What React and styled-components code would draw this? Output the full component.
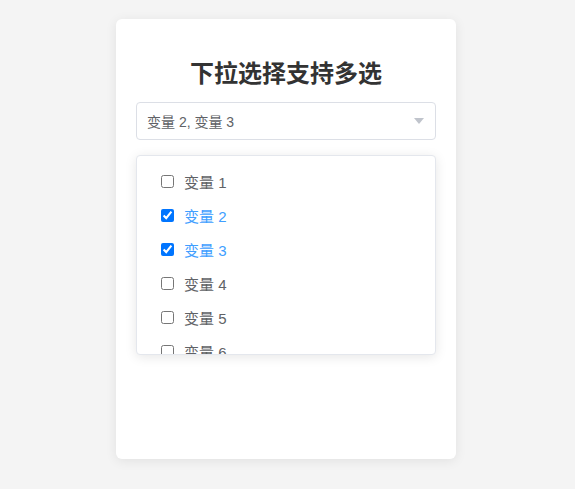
import React, { useState } from "react";
import styled, { createGlobalStyle } from "styled-components";

const GlobalStyle = createGlobalStyle`
  html, body {
    margin: 0;
    padding: 0;
    background: #f4f4f4;
    font-family: "Liberation Sans", "Noto Sans CJK SC", sans-serif;
  }
`;

const Page = styled.div`
  display: flex;
  justify-content: center;
  padding-top: 19px;
  min-height: 489px;
  box-sizing: border-box;
`;

const Card = styled.div`
  width: 340px;
  height: 440px;
  box-sizing: border-box;
  margin-left: -3px;
  padding: 20px;
  background: #fff;
  border-radius: 6px;
  box-shadow: 0 2px 12px rgba(0, 0, 0, 0.08);
  display: flex;
  flex-direction: column;
`;

const Title = styled.h2`
  margin: 17px 0 14px;
  font-family: "Noto Sans CJK SC", sans-serif;
  font-size: 24px;
  line-height: 32px;
  font-weight: 700;
  color: #333;
  text-align: center;
`;

const SelectBox = styled.div`
  height: 38px;
  box-sizing: border-box;
  border: 1px solid #dcdfe6;
  border-radius: 4px;
  padding: 0 10px;
  display: flex;
  align-items: center;
  justify-content: space-between;
  font-size: 14px;
  color: #606266;
  cursor: pointer;
`;

const Arrow = styled.span`
  width: 0;
  height: 0;
  border-left: 5px solid transparent;
  border-right: 5px solid transparent;
  border-top: 6px solid #c0c4cc;
  margin-right: 1px;
`;

const Dropdown = styled.ul`
  margin: 15px 0 0;
  padding: 8px 0;
  list-style: none;
  height: 200px;
  box-sizing: border-box;
  overflow: hidden;
  border: 1px solid #e4e7ed;
  border-radius: 4px;
  box-shadow: 0 2px 12px rgba(0, 0, 0, 0.1);
  background: #fff;
`;

const Option = styled.li`
  height: 34px;
  flex-shrink: 0;
  display: flex;
  align-items: center;
  padding-left: 20px;
  font-size: 15px;
  color: ${props => (props.checked ? "#409eff" : "#606266")};
  cursor: pointer;

  input {
    margin: 3px 10px 3px 4px;
    width: 13px;
    height: 13px;
  }
`;

const options = ["变量 1", "变量 2", "变量 3", "变量 4", "变量 5", "变量 6", "变量 7"];

export default function App() {
  const [selected, setSelected] = useState(["变量 2", "变量 3"]);

  const toggle = name => {
    setSelected(prev =>
      prev.includes(name) ? prev.filter(n => n !== name) : [...prev, name]
    );
  };

  return (
    <>
      <GlobalStyle />
      <Page>
        <Card>
          <Title>下拉选择支持多选</Title>
          <SelectBox>
            <span>{selected.join(", ")}</span>
            <Arrow />
          </SelectBox>
          <Dropdown>
            {options.map(name => {
              const checked = selected.includes(name);
              return (
                <Option key={name} checked={checked} onClick={() => toggle(name)}>
                  <input type="checkbox" checked={checked} readOnly />
                  {name}
                </Option>
              );
            })}
          </Dropdown>
        </Card>
      </Page>
    </>
  );
}
